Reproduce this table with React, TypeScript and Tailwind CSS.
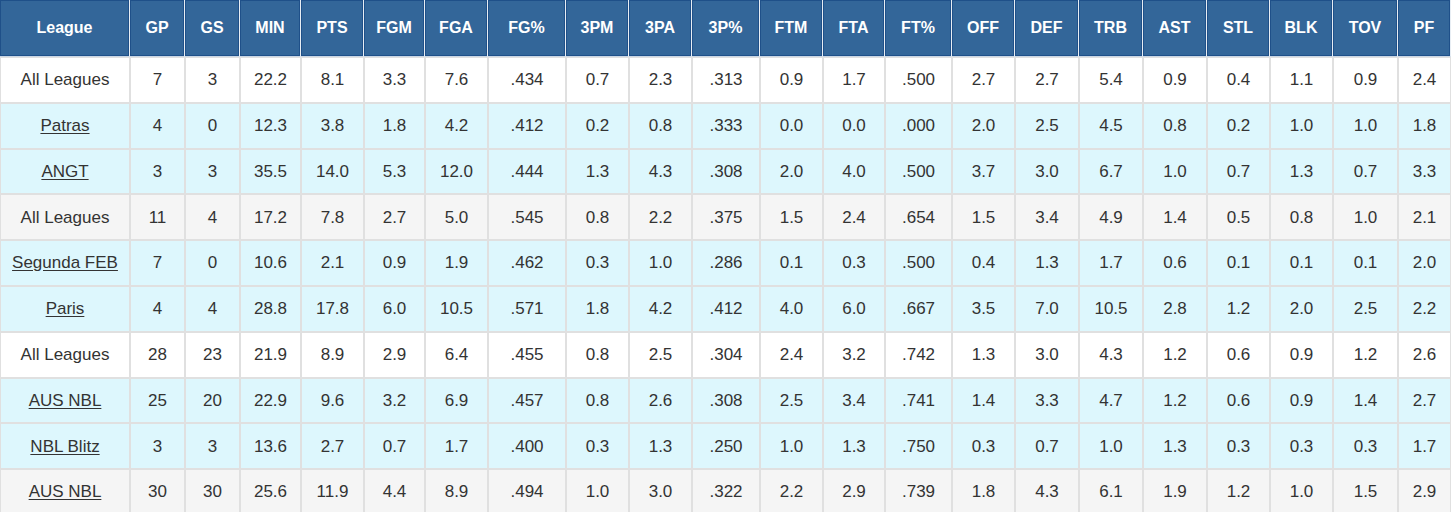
const COLS: { label: string; w: number }[] = [
  { label: "League", w: 130 },
  { label: "GP", w: 55 },
  { label: "GS", w: 55 },
  { label: "MIN", w: 61 },
  { label: "PTS", w: 63 },
  { label: "FGM", w: 61 },
  { label: "FGA", w: 63 },
  { label: "FG%", w: 78 },
  { label: "3PM", w: 63 },
  { label: "3PA", w: 63 },
  { label: "3P%", w: 68 },
  { label: "FTM", w: 63 },
  { label: "FTA", w: 62 },
  { label: "FT%", w: 67 },
  { label: "OFF", w: 63 },
  { label: "DEF", w: 64 },
  { label: "TRB", w: 64 },
  { label: "AST", w: 64 },
  { label: "STL", w: 63 },
  { label: "BLK", w: 63 },
  { label: "TOV", w: 65 },
  { label: "PF", w: 53 },
];

type Row = { league: string; link: boolean; bg: string; stats: string[] };

const ROWS: Row[] = [
  { league: "All Leagues", link: false, bg: "bg-white", stats: "7 3 22.2 8.1 3.3 7.6 .434 0.7 2.3 .313 0.9 1.7 .500 2.7 2.7 5.4 0.9 0.4 1.1 0.9 2.4".split(" ") },
  { league: "Patras", link: true, bg: "bg-[#ddf7fd]", stats: "4 0 12.3 3.8 1.8 4.2 .412 0.2 0.8 .333 0.0 0.0 .000 2.0 2.5 4.5 0.8 0.2 1.0 1.0 1.8".split(" ") },
  { league: "ANGT", link: true, bg: "bg-[#ddf7fd]", stats: "3 3 35.5 14.0 5.3 12.0 .444 1.3 4.3 .308 2.0 4.0 .500 3.7 3.0 6.7 1.0 0.7 1.3 0.7 3.3".split(" ") },
  { league: "All Leagues", link: false, bg: "bg-[#f5f5f5]", stats: "11 4 17.2 7.8 2.7 5.0 .545 0.8 2.2 .375 1.5 2.4 .654 1.5 3.4 4.9 1.4 0.5 0.8 1.0 2.1".split(" ") },
  { league: "Segunda FEB", link: true, bg: "bg-[#ddf7fd]", stats: "7 0 10.6 2.1 0.9 1.9 .462 0.3 1.0 .286 0.1 0.3 .500 0.4 1.3 1.7 0.6 0.1 0.1 0.1 2.0".split(" ") },
  { league: "Paris", link: true, bg: "bg-[#ddf7fd]", stats: "4 4 28.8 17.8 6.0 10.5 .571 1.8 4.2 .412 4.0 6.0 .667 3.5 7.0 10.5 2.8 1.2 2.0 2.5 2.2".split(" ") },
  { league: "All Leagues", link: false, bg: "bg-white", stats: "28 23 21.9 8.9 2.9 6.4 .455 0.8 2.5 .304 2.4 3.2 .742 1.3 3.0 4.3 1.2 0.6 0.9 1.2 2.6".split(" ") },
  { league: "AUS NBL", link: true, bg: "bg-[#ddf7fd]", stats: "25 20 22.9 9.6 3.2 6.9 .457 0.8 2.6 .308 2.5 3.4 .741 1.4 3.3 4.7 1.2 0.6 0.9 1.4 2.7".split(" ") },
  { league: "NBL Blitz", link: true, bg: "bg-[#ddf7fd]", stats: "3 3 13.6 2.7 0.7 1.7 .400 0.3 1.3 .250 1.0 1.3 .750 0.3 0.7 1.0 1.3 0.3 0.3 0.3 1.7".split(" ") },
  { league: "AUS NBL", link: true, bg: "bg-[#f5f5f5]", stats: "30 30 25.6 11.9 4.4 8.9 .494 1.0 3.0 .322 2.2 2.9 .739 1.8 4.3 6.1 1.9 1.2 1.0 1.5 2.9".split(" ") },
];

export default function App() {
  return (
    <div className="w-[1456px] h-[512px] overflow-hidden bg-white font-['Liberation_Sans',Arial,sans-serif]">
      <table className="table-fixed w-[1451px] border-separate border-spacing-0">
        <colgroup>
          {COLS.map((c) => (
            <col key={c.label} style={{ width: c.w }} />
          ))}
        </colgroup>
        <thead>
          <tr>
            {COLS.map((c) => (
              <th
                key={c.label}
                className="h-[57px] bg-[#336699] border-r border-b border-b-[#c9d6e4] border-r-[#e8eef4] shadow-[inset_0_0_0_1px_#1f5089] text-white text-[16px] font-bold text-center align-middle p-0"
              >
                {c.label}
              </th>
            ))}
          </tr>
        </thead>
        <tbody>
          {ROWS.map((r, i) => (
            <tr key={i} className={r.bg}>
              <td className="h-[45.8px] border-x border-y border-[#e0e0e0] text-center text-[17px] text-[#333333] p-0 whitespace-nowrap">
                {r.link ? <span className="underline underline-offset-2">{r.league}</span> : r.league}
              </td>
              {r.stats.map((s, j) => (
                <td
                  key={j}
                  className="h-[45.8px] border-x border-y border-[#e0e0e0] text-center text-[17px] text-[#333333] p-0"
                >
                  {s}
                </td>
              ))}
            </tr>
          ))}
        </tbody>
      </table>
    </div>
  );
}
